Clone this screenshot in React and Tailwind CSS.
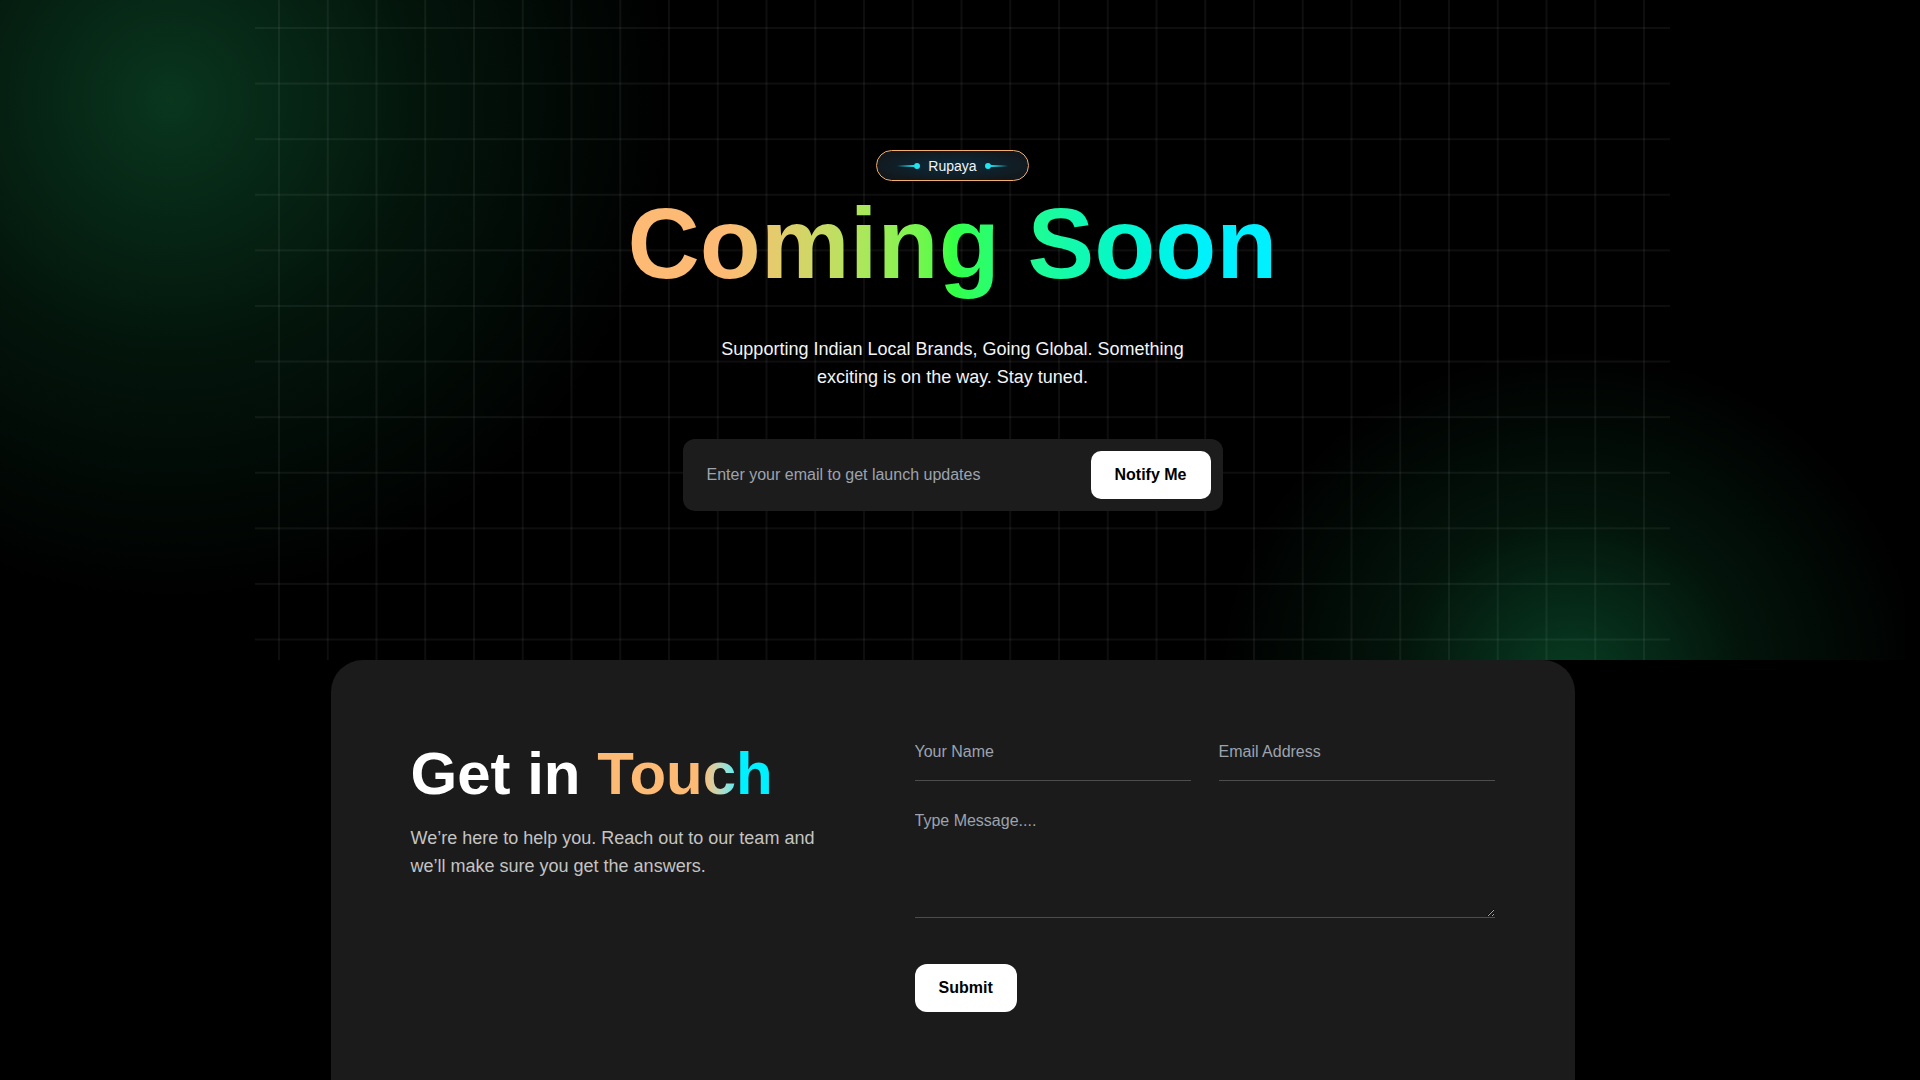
export default function App() {
  return (
    <div className="h-screen overflow-y-scroll bg-black pr-[15px] text-white font-['Liberation_Sans',Arial,sans-serif]">
      <Hero />
      <Contact />
    </div>
  );
}

function Hero() {
  return (
    <section className="relative h-[660px] overflow-hidden">
      {/* Glows */}
      <div className="absolute left-[-330px] top-[-400px] w-[1000px] h-[1000px] bg-[radial-gradient(circle_closest-side,rgba(9,54,30,1),rgba(6,38,21,0.55)_50%,transparent)]" />
      <div className="absolute left-[1220px] top-[350px] w-[700px] h-[660px] bg-[radial-gradient(closest-side,rgba(8,60,34,1),rgba(6,40,22,0.5)_50%,transparent)]" />

      {/* Grid */}
      <div className="absolute top-0 bottom-0 left-[255px] w-[1415px] bg-[linear-gradient(to_right,rgba(255,255,255,0.055)_2px,transparent_2px),linear-gradient(to_bottom,rgba(255,255,255,0.055)_2px,transparent_2px)] bg-size-[48.75px_55.6px] bg-position-[23px_27px]" />

      <div className="relative flex flex-col items-center pt-[150px]">
        {/* Badge */}
        <div className="flex items-center gap-2 h-[31px] px-[20px] rounded-full border border-[#f3ad6c] bg-[radial-gradient(ellipse_at_center,#0b2b3d_0%,#12191e_75%)]">
          <span className="flex items-center">
            <span className="w-[17px] h-[2px] bg-gradient-to-r from-transparent to-[#22dbe8]" />
            <span className="w-[6px] h-[6px] rounded-full bg-[#22e4f2]" />
          </span>
          <span className="text-sm text-gray-100">Rupaya</span>
          <span className="flex items-center">
            <span className="w-[6px] h-[6px] rounded-full bg-[#22e4f2]" />
            <span className="w-[17px] h-[2px] bg-gradient-to-r from-[#22dbe8] to-transparent" />
          </span>
        </div>

        <h1 className="mt-3 pb-4 text-[100px] font-bold leading-none bg-gradient-to-r from-[#fdba74] from-15% via-[#33ff44] via-50% to-[#00f0ff] to-90% bg-clip-text text-transparent">
          Coming Soon
        </h1>

        <p className="mt-[26px] max-w-lg text-center text-lg text-gray-100">
          Supporting Indian Local Brands, Going Global. Something exciting is on the way. Stay tuned.
        </p>

        {/* Notify form */}
        <form className="mt-12 flex items-center w-[540px] p-3 pl-6 rounded-xl bg-[#1c1c1c]">
          <input
            type="email"
            placeholder="Enter your email to get launch updates"
            className="flex-1 bg-transparent text-base text-white outline-none placeholder:text-[#9ca3af]"
          />
          <button type="button" className="h-12 px-6 rounded-[10px] bg-white text-base font-bold text-black">
            Notify Me
          </button>
        </form>
      </div>
    </section>
  );
}

function Contact() {
  return (
    <section className="mx-auto w-[1244px] flex rounded-[32px] bg-[#1b1b1b] px-20 pt-[72px] pb-[162px]">
      <div className="flex-1 pt-3">
        <h2 className="text-6xl font-bold leading-none">
          Get in{" "}
          <span className="bg-gradient-to-r from-[#fdba74] from-60% to-[#00f0ff] to-80% bg-clip-text text-transparent">
            Touch
          </span>
        </h2>
        <p className="mt-5 max-w-[420px] text-lg text-[#c4c4c4]">
          We’re here to help you. Reach out to our team and we’ll make sure you get the answers.
        </p>
      </div>

      <form className="w-[580px]">
        <div className="grid grid-cols-2 gap-7">
          <input
            type="text"
            placeholder="Your Name"
            className="pt-2 pb-4 bg-transparent border-b border-[#4d4d4d] text-base text-white outline-none placeholder:text-[#9ca3af]"
          />
          <input
            type="email"
            placeholder="Email Address"
            className="pt-2 pb-4 bg-transparent border-b border-[#4d4d4d] text-base text-white outline-none placeholder:text-[#9ca3af]"
          />
        </div>
        <textarea
          rows={4}
          placeholder="Type Message...."
          className="block mt-4 w-full py-3 bg-transparent border-b border-[#4d4d4d] text-base text-white outline-none placeholder:text-[#9ca3af]"
        />
        <button type="button" className="mt-[46px] h-12 px-6 rounded-xl bg-white text-base font-bold text-black">
          Submit
        </button>
      </form>
    </section>
  );
}
